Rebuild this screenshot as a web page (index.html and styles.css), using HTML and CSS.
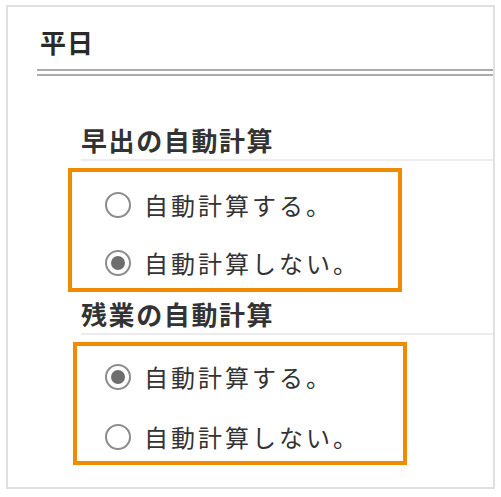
FILE: index.html
```html
<!DOCTYPE html>
<html lang="ja">
<head>
<meta charset="utf-8">
<title>平日</title>
<link rel="stylesheet" href="styles.css">
</head>
<body>
<div class="frame">
  <h1 class="title">平日</h1>
  <div class="rule"></div>

  <section class="section">
    <h2 class="sub-title">早出の自動計算</h2>
    <div class="options options-early">
      <label class="option"><span class="radio"></span><span class="label">自動計算する。</span></label>
      <label class="option"><span class="radio checked"></span><span class="label">自動計算しない。</span></label>
      <div class="annot annot-early"></div>
    </div>
  </section>

  <section class="section">
    <h2 class="sub-title sub-title-over">残業の自動計算</h2>
    <div class="options options-over">
      <label class="option"><span class="radio checked"></span><span class="label">自動計算する。</span></label>
      <label class="option"><span class="radio"></span><span class="label">自動計算しない。</span></label>
      <div class="annot annot-over"></div>
    </div>
  </section>
</div>
</body>
</html>
```

FILE: styles.css
```css
* { box-sizing: border-box; }

html, body {
  margin: 0;
  padding: 0;
  background: #ffffff;
}

body {
  font-family: "Noto Sans CJK JP", "Noto Sans", sans-serif;
  color: #333333;
}

.frame {
  position: relative;
  margin: 5px 0 0 6px;
  width: 489px;
  height: 484px;
  border: 2px solid #e0e0e0;
  background: #ffffff;
}

.title {
  margin: 20px 0 0 29px;
  padding-left: 3px;
  height: 30px;
  line-height: 30px;
  font-size: 26px;
  font-weight: 700;
  color: #2a2a2a;
  letter-spacing: 1px;
}

.rule {
  margin: 12px 0 0 29px;
  height: 7px;
  border-top: 2px solid #ababab;
  border-bottom: 2px solid #ababab;
}

.section {
  margin-left: 73px;
}

.sub-title {
  margin: 48px 0 0 0;
  height: 37px;
  line-height: 32px;
  padding-bottom: 3px;
  border-bottom: 2px solid #ececec;
  font-size: 26px;
  font-weight: 700;
  color: #333333;
  letter-spacing: 1.6px;
}

.sub-title-over {
  margin-top: 6px;
}

.options {
  position: relative;
  margin-left: -73px;
  padding-left: 97px;
  display: flex;
  flex-direction: column;
}

.options-early { padding-top: 15px; }
.options-over { padding-top: 12px; }

.option {
  display: flex;
  align-items: center;
  gap: 13px;
  height: 58px;
}

.options-over .option { height: 60px; }

.radio {
  position: relative;
  flex: none;
  width: 26px;
  height: 26px;
  border: 2px solid #8c8c8c;
  border-radius: 50%;
  background: #ffffff;
}

.radio.checked::after {
  content: "";
  position: absolute;
  left: 4px;
  top: 4px;
  width: 14px;
  height: 14px;
  border-radius: 50%;
  background: #6e6e6e;
}

.label {
  font-size: 24px;
  letter-spacing: 3px;
  color: #333333;
  line-height: 30px;
}

.annot {
  position: absolute;
  border: 4px solid #f08a00;
  pointer-events: none;
}

.annot-early {
  left: 60px;
  top: 7px;
  width: 334px;
  height: 124px;
}

.annot-over {
  left: 65px;
  top: 7px;
  width: 334px;
  height: 123px;
}
```
